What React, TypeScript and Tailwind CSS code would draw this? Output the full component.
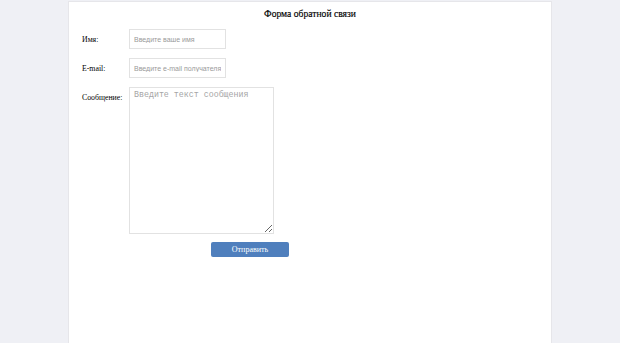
import React from "react";

export default function App() {
  return (
    <div className="w-[620px] h-[343px] bg-[#eff0f5] overflow-hidden">
      <div className="ml-[68px] mt-px w-[484px] h-[342px] bg-white border-x border-t border-[#e6e6ea] font-['Liberation_Serif','Times_New_Roman',serif]">
        <h1 className="text-center text-[9.6px] font-normal text-black mt-[5px] leading-[14px] [-webkit-text-stroke:0.15px_black]">
          Форма обратной связи
        </h1>
        <div className="mt-[8px] pl-[13px] flex flex-col gap-[9px]">
          <div className="flex items-start">
            <label className="w-[47px] pt-[6px] text-[7.8px] text-black leading-[10px]">Имя:</label>
            <input
              className="block w-[97px] h-[20px] border border-[#e2e2e2] px-[4px] text-[7px] outline-none placeholder:text-[#9a9a9a] font-['Liberation_Sans',Arial,sans-serif]"
              placeholder="Введите ваше имя"
            />
          </div>
          <div className="flex items-start">
            <label className="w-[47px] pt-[6px] text-[7.8px] text-black leading-[10px]">E-mail:</label>
            <input
              className="block w-[97px] h-[20px] border border-[#e2e2e2] px-[4px] text-[7px] outline-none placeholder:text-[#9a9a9a] font-['Liberation_Sans',Arial,sans-serif]"
              placeholder="Введите e-mail получателя"
            />
          </div>
          <div className="flex items-start">
            <label className="w-[47px] pt-[6px] text-[7.8px] text-black leading-[10px]">Сообщение:</label>
            <textarea
              className="block w-[145px] h-[147px] border border-[#e2e2e2] px-[4px] py-[2px] text-[8.3px] leading-[10px] outline-none placeholder:text-[#a5a5a5] font-['Liberation_Mono','Courier_New',monospace]"
              placeholder="Введите текст сообщения"
            />
          </div>
        </div>
        <div className="mt-[8px] ml-[142px]">
          <button className="block w-[78px] h-[15px] bg-[#4f7fbd] rounded-[2px] text-white text-[8px] leading-[15px]">
            Отправить
          </button>
        </div>
      </div>
    </div>
  );
}
